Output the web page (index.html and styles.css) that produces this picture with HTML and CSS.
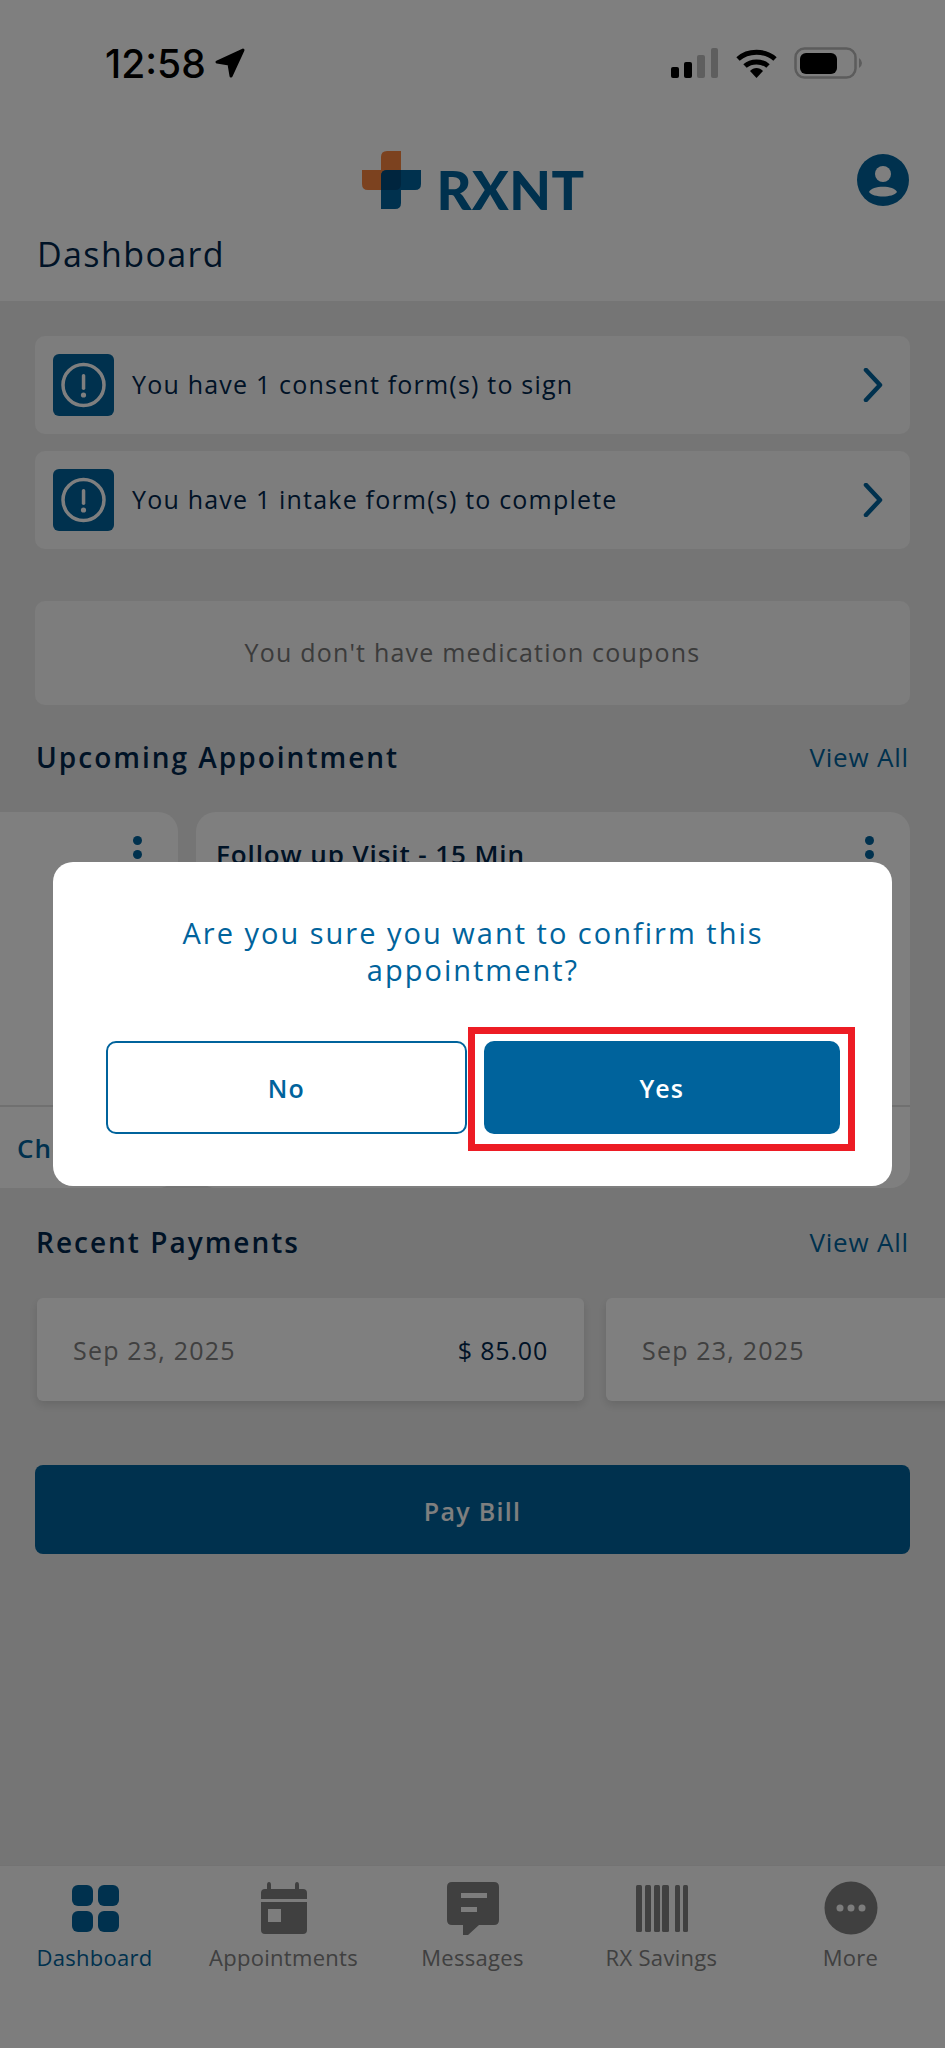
FILE: index.html
```html
<!DOCTYPE html>
<html lang="en">
<head>
    <meta charset="UTF-8">
    <meta name="viewport" content="width=device-width, initial-scale=1.0">
    <title>Dashboard - RXNT</title>
    <link rel="stylesheet" href="styles.css">
</head>
<body>
    <div class="app">
        <header class="app-header">
            <div class="status-bar">
                <div class="status-time">
                    <span>12:58</span>
                    <svg class="status-arrow" viewBox="0 0 30 30"><path d="M28 2 L2 14 L14 16 L16 28 Z" fill="#000" stroke="#000" stroke-width="3" stroke-linejoin="round"/></svg>
                </div>
                <div class="status-icons">
                    <svg class="status-signal" viewBox="0 0 47 30">
                        <rect x="0" y="19" width="8" height="11" rx="2" fill="#000"/>
                        <rect x="13" y="14" width="8" height="16" rx="2" fill="#000"/>
                        <rect x="26" y="7" width="8" height="23" rx="2" fill="#bdbdbd"/>
                        <rect x="40" y="0" width="7" height="30" rx="2" fill="#bdbdbd"/>
                    </svg>
                    <svg class="status-wifi" viewBox="0 0 41 30">
                        <path d="M2 11 C12 2 29 2 39 11" fill="none" stroke="#000" stroke-width="5"/>
                        <path d="M9 18 C15 12.500 26 12.500 32 18" fill="none" stroke="#000" stroke-width="5"/>
                        <path d="M14 23 C17.500 19 23.500 19 27 23 L20.500 30 Z" fill="#000"/>
                    </svg>
                    <svg class="status-battery" viewBox="0 0 68 32">
                        <rect x="1.500" y="1.500" width="60" height="29" rx="9" fill="none" stroke="#b8b8b8" stroke-width="2.500"/>
                        <rect x="6" y="6" width="37" height="21" rx="6" fill="#000"/>
                        <path d="M65 11 Q68 13 68 16 Q68 19 65 21 Z" fill="#b8b8b8"/>
                    </svg>
                </div>
            </div>
            <div class="brand-row">
                <div class="logo">
                    <svg class="logo-cross" viewBox="0 0 59 58">
                        <path d="M19 6 Q19 0 25 0 L39 0 L39 39 L6 39 Q0 39 0 33 L0 19 L19 19 Z" fill="#f8853f"/>
                        <path d="M25 19 L59 19 L59 33 Q59 39 53 39 L39 39 L39 52 Q39 58 33 58 L19 58 L19 25 Q19 19 25 19 Z" fill="#00639c"/>
                        <path d="M25 19 L39 19 L39 33 Q39 39 33 39 L19 39 L19 25 Q19 19 25 19 Z" fill="#004a7c"/>
                    </svg>
                    <span class="logo-text">RXNT</span>
                </div>
                <svg class="avatar" viewBox="0 0 52 52">
                    <circle cx="26" cy="26" r="26" fill="#00639c"/>
                    <circle cx="26" cy="20" r="8" fill="#fff"/>
                    <path d="M12 38 C15 31 37 31 40 38 C36 44 16 44 12 38 Z" fill="#fff"/>
                </svg>
            </div>
            <h1 class="page-title">Dashboard</h1>
        </header>

        <main class="content">
            <div class="alert-list">
                <div class="alert-row">
                    <svg class="alert-icon" viewBox="0 0 61 62">
                        <rect width="61" height="62" rx="6" fill="#00639c"/>
                        <circle cx="30.500" cy="31" r="20.500" fill="none" stroke="#fff" stroke-width="3.500"/>
                        <rect x="28.800" y="20" width="3.500" height="16" rx="1.700" fill="#fff"/>
                        <circle cx="30.500" cy="41" r="2.600" fill="#fff"/>
                    </svg>
                    <span class="alert-text">You have 1 consent form(s) to sign</span>
                    <svg class="alert-chevron" viewBox="0 0 20 34"><path d="M3 2 L17 17 L3 32" fill="none" stroke="#00639c" stroke-width="4.500" stroke-linecap="round" stroke-linejoin="round"/></svg>
                </div>
                <div class="alert-row">
                    <svg class="alert-icon" viewBox="0 0 61 62">
                        <rect width="61" height="62" rx="6" fill="#00639c"/>
                        <circle cx="30.500" cy="31" r="20.500" fill="none" stroke="#fff" stroke-width="3.500"/>
                        <rect x="28.800" y="20" width="3.500" height="16" rx="1.700" fill="#fff"/>
                        <circle cx="30.500" cy="41" r="2.600" fill="#fff"/>
                    </svg>
                    <span class="alert-text">You have 1 intake form(s) to complete</span>
                    <svg class="alert-chevron" viewBox="0 0 20 34"><path d="M3 2 L17 17 L3 32" fill="none" stroke="#00639c" stroke-width="4.500" stroke-linecap="round" stroke-linejoin="round"/></svg>
                </div>
            </div>

            <div class="coupon-box">You don't have medication coupons</div>

            <div class="section-head">
                <h2>Upcoming Appointment</h2>
                <a class="view-all">View All</a>
            </div>
            <div class="appt-scroller">
                <div class="appt-card">
                    <div class="appt-body">
                        <span class="appt-dots"><i></i><i></i></span>
                    </div>
                    <div class="appt-footer"><span>Check In</span></div>
                </div>
                <div class="appt-card">
                    <div class="appt-body">
                        <span class="appt-title">Follow up Visit - 15 Min</span>
                        <span class="appt-dots"><i></i><i></i></span>
                    </div>
                    <div class="appt-footer"></div>
                </div>
            </div>

            <div class="section-head section-payments">
                <h2>Recent Payments</h2>
                <a class="view-all">View All</a>
            </div>
            <div class="pay-scroller">
                <div class="pay-card">
                    <span class="pay-date">Sep 23, 2025</span>
                    <span class="pay-amount">$ 85.00</span>
                </div>
                <div class="pay-card">
                    <span class="pay-date">Sep 23, 2025</span>
                </div>
            </div>

            <button class="pay-btn">Pay Bill</button>
        </main>

        <nav class="tab-bar">
            <div class="tab tab-active">
                <svg class="tab-icon" viewBox="0 0 54 54">
                    <rect x="4" y="4" width="21" height="21" rx="6"/>
                    <rect x="30" y="4" width="21" height="21" rx="6"/>
                    <rect x="4" y="30" width="21" height="21" rx="6"/>
                    <rect x="30" y="30" width="21" height="21" rx="6"/>
                </svg>
                <span>Dashboard</span>
            </div>
            <div class="tab">
                <svg class="tab-icon" viewBox="0 0 54 54">
                    <path d="M10 8 L10 4 Q10 1 12 1 Q14 1 14 4 L14 8 L38 8 L38 4 Q38 1 40 1 Q42 1 42 4 L42 8 L46 8 Q50 8 50 12 L50 18 L4 18 L4 12 Q4 8 8 8 Z"/>
                    <path d="M4 21 L50 21 L50 49 Q50 53 46 53 L8 53 Q4 53 4 49 Z M11 28 L11 41 L24 41 L24 28 Z" fill-rule="evenodd"/>
                </svg>
                <span>Appointments</span>
            </div>
            <div class="tab">
                <svg class="tab-icon" viewBox="0 0 54 54">
                    <path d="M6 1 L48 1 Q53 1 53 6 L53 39 Q53 44 48 44 L33 44 L22 54 L17 54 L17 44 L6 44 Q1 44 1 39 L1 6 Q1 1 6 1 Z M15 17 L41 17 L41 12 L15 12 Z M15 31 L31 31 L31 26 L15 26 Z" fill-rule="evenodd"/>
                </svg>
                <span>Messages</span>
            </div>
            <div class="tab">
                <svg class="tab-icon" viewBox="0 0 54 54">
                    <rect x="1" y="4" width="6" height="47" rx="1.500"/>
                    <rect x="10" y="4" width="6" height="47" rx="1.500"/>
                    <rect x="19" y="4" width="6" height="47" rx="1.500"/>
                    <rect x="27" y="4" width="7" height="47" rx="1.500"/>
                    <rect x="40" y="4" width="5" height="47" rx="1.500"/>
                    <rect x="48" y="4" width="5" height="47" rx="1.500"/>
                </svg>
                <span>RX Savings</span>
            </div>
            <div class="tab">
                <svg class="tab-icon" viewBox="0 0 54 54">
                    <circle cx="27" cy="27" r="26.500"/>
                    <circle cx="16" cy="27" r="3.500" fill="#fafafa"/>
                    <circle cx="27" cy="27" r="3.500" fill="#fafafa"/>
                    <circle cx="38" cy="27" r="3.500" fill="#fafafa"/>
                </svg>
                <span>More</span>
            </div>
        </nav>
    </div>

    <div class="overlay">
        <div class="dialog">
            <p class="dialog-text">Are you sure you want to confirm this appointment?</p>
            <div class="dialog-actions">
                <button class="dialog-btn btn-no">No</button>
                <button class="dialog-btn btn-yes">Yes</button>
                <span class="callout"></span>
            </div>
        </div>
    </div>
</body>
</html>
```

FILE: styles.css
```css
* {
    margin: 0;
    padding: 0;
    box-sizing: border-box;
}

body {
    background: #ebebeb;
    font-family: 'Open Sans', sans-serif;
    width: 945px;
    height: 2048px;
    overflow: hidden;
}

.app {
    display: flex;
    flex-direction: column;
    height: 2048px;
}

.app-header {
    background: white;
    height: 301px;
    padding-top: 47px;
}

.status-bar {
    display: flex;
    justify-content: space-between;
    align-items: center;
    height: 32px;
    padding: 0 83px 0 105px;
}

.status-time {
    display: flex;
    align-items: center;
    gap: 9px;
    font-family: 'Inter', sans-serif;
    font-size: 39px;
    font-weight: 500;
    color: #000;
}

.status-arrow {
    width: 30px;
    height: 30px;
}

.status-icons {
    display: flex;
    align-items: center;
    gap: 18px;
}

.status-signal {
    width: 47px;
    height: 30px;
}

.status-wifi {
    width: 41px;
    height: 30px;
}

.status-battery {
    width: 68px;
    height: 32px;
    margin-left: -1px;
}

.brand-row {
    display: flex;
    justify-content: center;
    position: relative;
    margin-top: 72px;
    height: 58px;
}

.logo {
    display: flex;
    align-items: flex-end;
    gap: 15px;
    color: #00639c;
    margin-left: 2px;
}

.logo-cross {
    width: 59px;
    height: 58px;
}

.logo-text {
    font-family: 'Lato', sans-serif;
    font-size: 54px;
    font-weight: 900;
    line-height: 39px;
    letter-spacing: 0.5px;
    height: 39px;
}

.avatar {
    position: absolute;
    right: 36px;
    top: 3px;
    width: 52px;
    height: 52px;
}

.page-title {
    margin: 25px 0 0 37px;
    font-size: 34px;
    line-height: 40px;
    font-weight: 400;
    letter-spacing: 1.4px;
    color: #00264d;
}

.content {
    flex: 1;
    padding: 35px 35px 0;
}

.alert-list {
    display: flex;
    flex-direction: column;
    gap: 17px;
}

.alert-row {
    display: flex;
    align-items: center;
    height: 98px;
    padding: 0 27px 0 18px;
    background: #fafafa;
    border-radius: 10px;
}

.alert-icon {
    flex: none;
    width: 61px;
    height: 62px;
}

.alert-text {
    flex: 1;
    margin-left: 18px;
    padding-bottom: 2px;
    font-size: 25px;
    letter-spacing: 1.2px;
    color: #00264d;
}

.alert-chevron {
    width: 20px;
    height: 34px;
}

.coupon-box {
    display: flex;
    align-items: center;
    justify-content: center;
    height: 104px;
    margin-top: 52px;
    padding-bottom: 2px;
    background: #fafafa;
    border-radius: 10px;
    font-size: 25px;
    letter-spacing: 1.2px;
    color: #777;
}

.section-head {
    display: flex;
    justify-content: space-between;
    align-items: center;
    height: 36px;
    margin-top: 34px;
    padding: 0 1px;
}

.section-head h2 {
    font-size: 28px;
    font-weight: 600;
    letter-spacing: 2px;
    color: #00264d;
}

.view-all {
    font-size: 26px;
    letter-spacing: 0.8px;
    color: #00639c;
}

.appt-scroller {
    display: flex;
    justify-content: flex-end;
    gap: 18px;
    height: 376px;
    margin: 37px -35px 0;
    padding-right: 35px;
    overflow: hidden;
}

.appt-card {
    flex: none;
    display: flex;
    flex-direction: column;
    width: 714px;
    background: #fff;
    border-radius: 20px;
}

.appt-body {
    flex: 1;
    display: flex;
    justify-content: space-between;
    padding: 24px 36px 0 20px;
}

.appt-title {
    font-size: 26px;
    font-weight: 600;
    letter-spacing: 0.9px;
    line-height: 36px;
    color: #00264d;
}

.appt-dots {
    display: flex;
    flex-direction: column;
    gap: 5px;
    margin-left: auto;
}

.appt-dots i {
    display: block;
    width: 9px;
    height: 9px;
    border-radius: 50%;
    background: #00639c;
}

.appt-footer {
    display: flex;
    justify-content: flex-end;
    align-items: center;
    height: 83px;
    padding-right: 46px;
    border-top: 2px solid #e0e0e0;
    font-size: 26px;
    font-weight: 600;
    letter-spacing: 1px;
    color: #00639c;
}

.section-payments {
    margin-top: 36px;
}

.pay-scroller {
    display: flex;
    gap: 22px;
    margin: 38px -35px 0;
    padding: 0 0 20px 37px;
    overflow: hidden;
}

.pay-card {
    flex: none;
    display: flex;
    justify-content: space-between;
    align-items: center;
    width: 547px;
    height: 103px;
    padding: 0 36px;
    background: white;
    border-radius: 6px;
    box-shadow: 0 4px 10px rgba(0,0,0,0.12);
}

.pay-date {
    font-size: 25px;
    letter-spacing: 1.2px;
    color: #808080;
}

.pay-amount {
    font-size: 25px;
    letter-spacing: 0.8px;
    color: #00264d;
}

.pay-btn {
    display: block;
    width: 100%;
    height: 89px;
    margin-top: 44px;
    padding-top: 3px;
    background: #00639c;
    border: none;
    border-radius: 8px;
    font-family: 'Open Sans', sans-serif;
    font-size: 25px;
    font-weight: 600;
    letter-spacing: 1.3px;
    color: white;
}

.tab-bar {
    display: grid;
    grid-template-columns: repeat(5, 1fr);
    height: 183px;
    padding-top: 15px;
    background: #fafafa;
    border-top: 1px solid #e6e6e6;
}

.tab {
    display: flex;
    flex-direction: column;
    align-items: center;
    gap: 7px;
    font-size: 22px;
    letter-spacing: 0.3px;
    color: #808080;
}

.tab-icon {
    width: 54px;
    height: 54px;
    fill: #808080;
}

.tab-active {
    color: #00639c;
}

.tab-active .tab-icon {
    fill: #00639c;
}

.overlay {
    position: fixed;
    inset: 0;
    display: flex;
    align-items: center;
    justify-content: center;
    background: rgba(0,0,0,0.5);
}

.dialog {
    width: 839px;
    height: 324px;
    padding: 52px 52px 0 53px;
    background: white;
    border-radius: 20px;
}

.dialog-text {
    font-size: 29px;
    line-height: 37px;
    letter-spacing: 2px;
    text-align: center;
    padding: 0 60px;
    color: #00639c;
}

.dialog-actions {
    display: flex;
    gap: 17px;
    position: relative;
    margin-top: 53px;
}

.dialog-btn {
    flex: 1;
    height: 93px;
    border-radius: 10px;
    font-family: 'Open Sans', sans-serif;
    font-size: 25px;
    font-weight: 600;
    letter-spacing: 1px;
}

.btn-no {
    background: white;
    border: 2px solid #00639c;
    color: #00639c;
}

.btn-yes {
    background: #00639c;
    border: none;
    color: white;
}

.callout {
    position: absolute;
    left: 362px;
    top: -14px;
    width: 387px;
    height: 124px;
    border: 7px solid #ed1c24;
}
```
